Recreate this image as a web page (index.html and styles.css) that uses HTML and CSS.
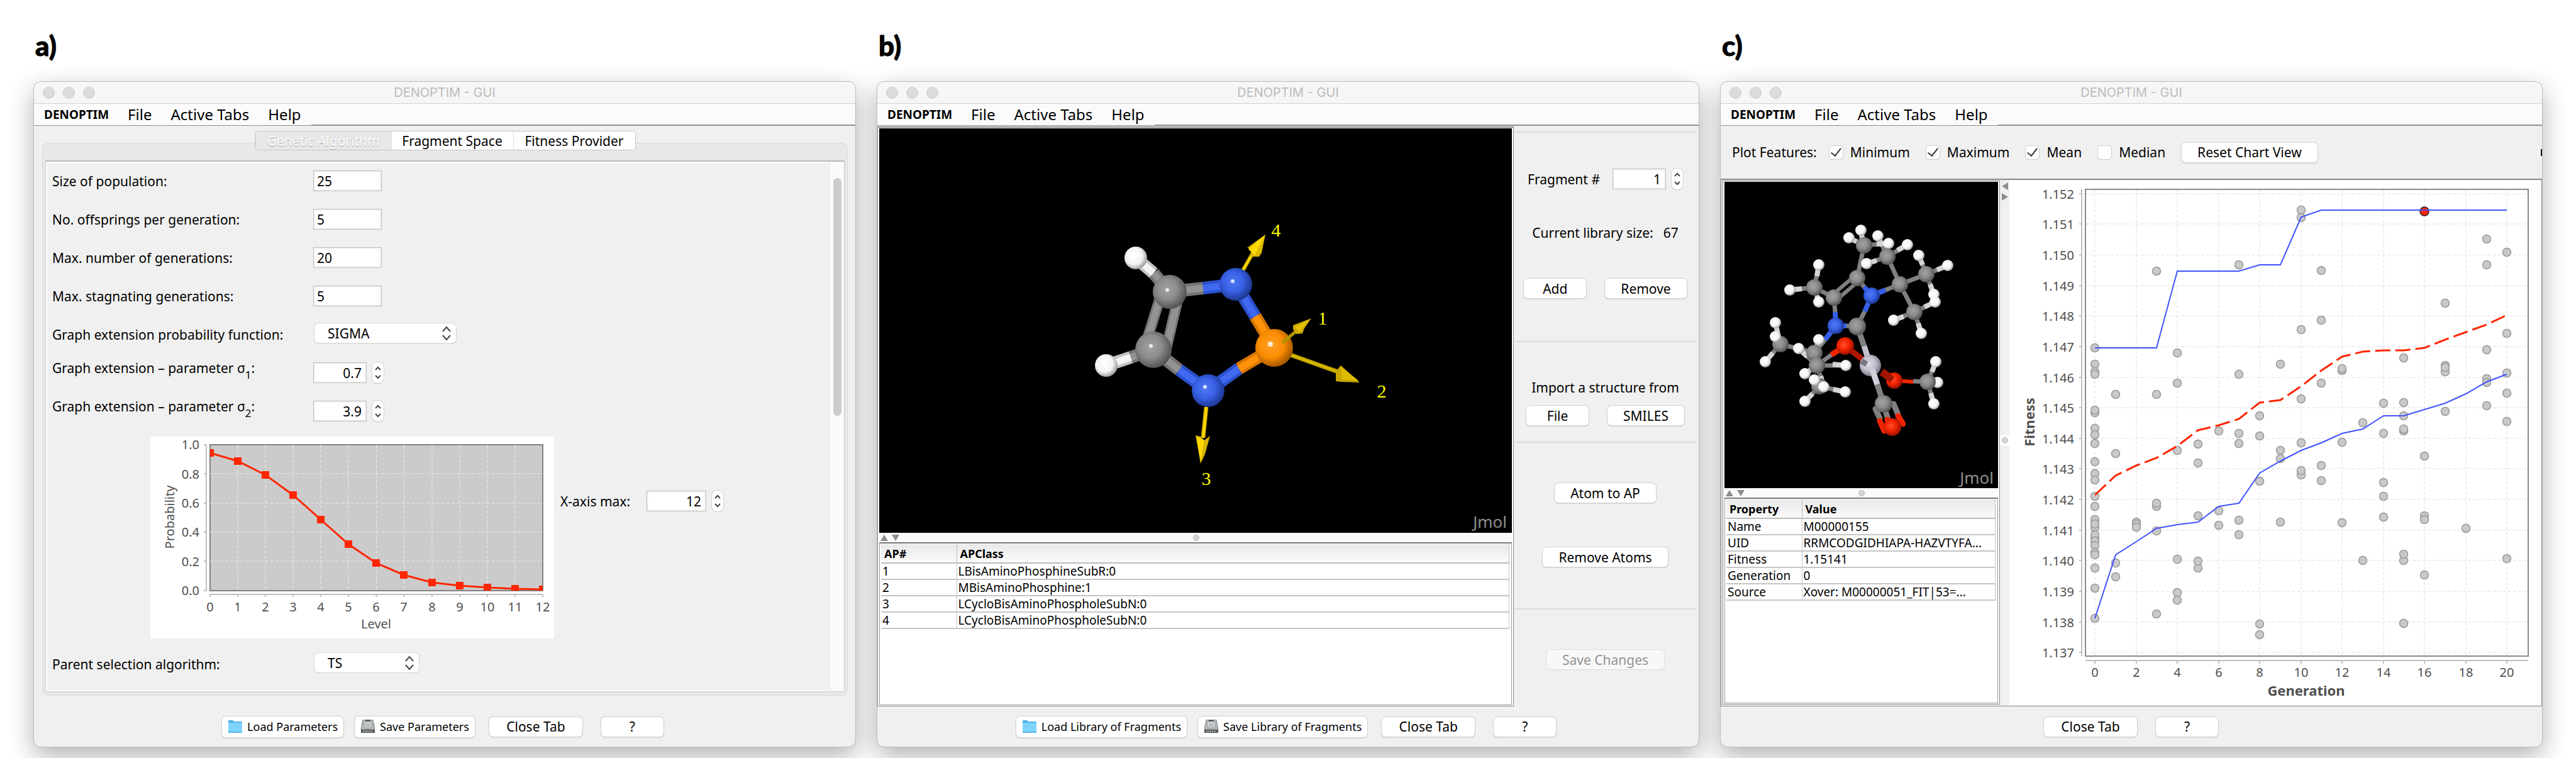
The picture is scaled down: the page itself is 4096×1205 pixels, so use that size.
FILE: index.html
```html
<!DOCTYPE html>
<html lang="en">
<head>
<meta charset="utf-8">
<title>DENOPTIM - GUI</title>
<link rel="stylesheet" href="styles.css">
</head>
<body>
<main class="figure">

<section class="panel">
  <h2 class="panel-label">a)</h2>
  <div class="window">
    <header class="titlebar"><span class="lights"><i></i><i></i><i></i></span><span class="title">DENOPTIM - GUI</span></header>
    <nav class="menubar"><span class="menus"><a class="brand" href="#">DENOPTIM</a><a href="#">File</a><a href="#">Active Tabs</a><a href="#">Help</a></span></nav>
    <div class="content tabbed">
      <div class="tabs">
        <button class="tab active">Genetic Algorithm</button>
        <button class="tab">Fragment Space</button>
        <button class="tab">Fitness Provider</button>
      </div>
      <div class="tab-pane">
        <div class="scroll-pane">
          <form class="form">
            <div class="row"><label for="pop">Size of population:</label><input class="field" id="pop" type="text" value="25"></div>
            <div class="row"><label for="off">No. offsprings per generation:</label><input class="field" id="off" type="text" value="5"></div>
            <div class="row"><label for="gen">Max. number of generations:</label><input class="field" id="gen" type="text" value="20"></div>
            <div class="row"><label for="stag">Max. stagnating generations:</label><input class="field" id="stag" type="text" value="5"></div>
            <div class="row"><label for="fun">Graph extension probability function:</label>
              <span class="select wide"><select id="fun"><option>SIGMA</option></select><svg class="updown" viewBox="0 0 16 26"><path d="M2 10l6-7 6 7M2 16l6 7 6-7"/></svg></span></div>
            <div class="row"><label class="with-sub" for="s1">Graph extension – parameter σ<sub>1</sub>:</label>
              <span class="spinner"><input class="field num" id="s1" type="text" value="0.7"><span class="stepper"><button type="button" aria-label="Increase"><svg viewBox="0 0 12 8"><path d="M2 6l4-4 4 4"/></svg></button><button type="button" aria-label="Decrease"><svg viewBox="0 0 12 8"><path d="M2 2l4 4 4-4"/></svg></button></span></span></div>
            <div class="row"><label class="with-sub" for="s2">Graph extension – parameter σ<sub>2</sub>:</label>
              <span class="spinner"><input class="field num" id="s2" type="text" value="3.9"><span class="stepper"><button type="button" aria-label="Increase"><svg viewBox="0 0 12 8"><path d="M2 6l4-4 4 4"/></svg></button><button type="button" aria-label="Decrease"><svg viewBox="0 0 12 8"><path d="M2 2l4 4 4-4"/></svg></button></span></span></div>
            <div class="chart-row">
              <svg class="sigma-chart" viewBox="0 0 642 321">
                <defs><clipPath id="plotA"><rect x="95" y="13" width="529" height="232"/></clipPath>
                <marker id="sq" markerUnits="userSpaceOnUse" markerWidth="12" markerHeight="12" refX="6" refY="6"><rect width="12" height="12" fill="#ff2600"/></marker></defs>
                <rect width="642" height="321" fill="#fff"/>
                <rect x="95" y="13" width="529" height="232" fill="#cbcbcb" stroke="#808080" stroke-width="2"/>
                <path class="grid-a" d="M139 13v232M183 13v232M227 13v232M271 13v232M315 13v232M359.500 13v232M403.500 13v232M448 13v232M492 13v232M536 13v232M580 13v232M95 59h529M95 106h529M95 152h529M95 198h529"/>
                <path class="axis" d="M89 13v232M95 251h529M85 13h4M85 59h4M85 106h4M85 152h4M85 198h4M85 245h4M95 251v4M139 251v4M183 251v4M227 251v4M271 251v4M315 251v4M359.500 251v4M403.500 251v4M448 251v4M492 251v4M536 251v4M580 251v4M624 251v4"/>
                <g clip-path="url(#plotA)"><polyline fill="none" stroke="#ff2600" stroke-width="3" marker-start="url(#sq)" marker-mid="url(#sq)" marker-end="url(#sq)" points="95,26 139,39 183,61 227,93 271,132 315,171 359,201 403,220 448,232 492,237 536,240 580,242 624,243"/></g>
                <g class="tick end"><text x="78" y="20">1.0</text><text x="78" y="67">0.8</text><text x="78" y="113">0.6</text><text x="78" y="159">0.4</text><text x="78" y="206">0.2</text><text x="78" y="252">0.0</text></g>
                <g class="tick mid"><text x="95" y="278">0</text><text x="139" y="278">1</text><text x="183" y="278">2</text><text x="227" y="278">3</text><text x="271" y="278">4</text><text x="315" y="278">5</text><text x="359" y="278">6</text><text x="403" y="278">7</text><text x="448" y="278">8</text><text x="492" y="278">9</text><text x="536" y="278">10</text><text x="580" y="278">11</text><text x="624" y="278">12</text>
                <text x="359" y="305">Level</text><text transform="translate(38 128) rotate(-90)">Probability</text></g>
              </svg>
              <div class="xmax"><label for="xm">X-axis max:</label>
              <span class="spinner"><input class="field num big" id="xm" type="text" value="12"><span class="stepper"><button type="button" aria-label="Increase"><svg viewBox="0 0 12 8"><path d="M2 6l4-4 4 4"/></svg></button><button type="button" aria-label="Decrease"><svg viewBox="0 0 12 8"><path d="M2 2l4 4 4-4"/></svg></button></span></span></div>
            </div>
            <div class="row"><label for="psa">Parent selection algorithm:</label>
              <span class="select narrow"><select id="psa"><option>TS</option></select><svg class="updown" viewBox="0 0 16 26"><path d="M2 10l6-7 6 7M2 16l6 7 6-7"/></svg></span></div>
          </form>
          <div class="scrollbar"><div class="thumb"></div></div>
        </div>
      </div>
    </div>
    <footer class="actions">
      <button class="btn icon-btn"><svg class="ico" viewBox="0 0 24 22"><path d="M1 2q0-1 1-1h6l2 2h12q1 0 1 1v4H1z" fill="#4fb4e6"/><rect x="1" y="5" width="22" height="16" rx="1" fill="#7fd3fb"/><path d="M1 20h22" stroke="#5bb8e8" stroke-width="2"/></svg>Load Parameters</button>
      <button class="btn icon-btn"><svg class="ico" viewBox="0 0 24 22"><path d="M4 0h16l3 16H1z" fill="#b4b9bb" stroke="#7e8385"/><ellipse cx="12" cy="8" rx="7" ry="6" fill="#c9cdce" stroke="#93989a"/><circle cx="12" cy="9" r="2" fill="#dfe2e3" stroke="#8a8f91"/><path d="M1 16h22v5H1z" fill="#4e5152"/><path d="M4 18.500h16" stroke="#c0c4c5" stroke-width="2" stroke-dasharray="2 1"/><path d="M8 1.500h8" stroke="#444" stroke-width="2"/></svg>Save Parameters</button>
      <button class="btn close">Close Tab</button>
      <button class="btn help">?</button>
    </footer>
  </div>
</section>

<section class="panel">
  <h2 class="panel-label">b)</h2>
  <div class="window">
    <header class="titlebar"><span class="lights"><i></i><i></i><i></i></span><span class="title">DENOPTIM - GUI</span></header>
    <nav class="menubar"><span class="menus"><a class="brand" href="#">DENOPTIM</a><a href="#">File</a><a href="#">Active Tabs</a><a href="#">Help</a></span></nav>
    <div class="content split">
      <div class="viewer">
        <svg class="canvas" viewBox="0 0 1006 643">
          <defs>
            <radialGradient id="gC" cx=".42" cy=".42" r=".62"><stop offset="0" stop-color="#a2a2a2"/><stop offset=".5" stop-color="#8b8b8b"/><stop offset="1" stop-color="#4c4c4c"/></radialGradient>
            <radialGradient id="gN" cx=".42" cy=".42" r=".62"><stop offset="0" stop-color="#5078f4"/><stop offset=".5" stop-color="#3860e6"/><stop offset="1" stop-color="#1a3286"/></radialGradient>
            <radialGradient id="gP" cx=".42" cy=".42" r=".62"><stop offset="0" stop-color="#ffa028"/><stop offset=".55" stop-color="#fb8c00"/><stop offset="1" stop-color="#985200"/></radialGradient>
            <radialGradient id="gH" cx=".42" cy=".42" r=".62"><stop offset="0" stop-color="#fff"/><stop offset=".6" stop-color="#f4f4f4"/><stop offset="1" stop-color="#929292"/></radialGradient>
            <radialGradient id="gO" cx=".42" cy=".42" r=".62"><stop offset="0" stop-color="#ff5030"/><stop offset=".5" stop-color="#f42200"/><stop offset="1" stop-color="#8c1000"/></radialGradient>
            <radialGradient id="gM" cx=".42" cy=".42" r=".62"><stop offset="0" stop-color="#dedde8"/><stop offset=".5" stop-color="#c2c1cd"/><stop offset="1" stop-color="#737280"/></radialGradient>
          </defs>
          <rect width="1006" height="643"/>
          <g fill="none" stroke-width="20">
            <path stroke="#747474" d="M462 260L515 254M436 352L477 384M462 260L436 230M436 352L400 364"/>
            <path stroke="#2b50cc" d="M515 254L567 248M477 384L523 417L572 382M567 248L598 299"/>
            <path stroke="#d87600" d="M598 299L628 349L572 382"/>
            <path stroke="#c4c4c4" d="M436 230L408 206M400 364L361 377"/>
            <path stroke="#747474" stroke-width="17" d="M447 268L423 345M474 275L456 352"/>
          </g>
          <g fill="none" stroke-width="11">
            <path stroke="#939393" d="M462 260L515 254M436 352L477 384M462 260L436 230M436 352L400 364M447 268L423 345M474 275L456 352"/>
            <path stroke="#4068f0" d="M515 254L567 248M477 384L523 417L572 382M567 248L598 299"/>
            <path stroke="#ff9208" d="M598 299L628 349L572 382"/>
            <path stroke="#f4f4f4" d="M436 230L408 206M400 364L361 377"/>
          </g>
          <path stroke="#c8a800" stroke-width="6" d="M577 228L597 193"/><path stroke="#ffd800" stroke-width="3" d="M577 228L597 193"/>
          <path fill="#dcb800" d="M614 169L585 190l7 2-2 12 14 0 4-6z"/><path fill="#ffd800" d="M614 169L587 192l10 10z"/>
          <circle cx="408" cy="206" r="18" fill="url(#gH)"/><circle cx="361" cy="377" r="18" fill="url(#gH)"/>
          <circle cx="462" cy="260" r="27" fill="url(#gC)"/><circle cx="436" cy="352" r="29" fill="url(#gC)"/>
          <circle cx="567" cy="248" r="26" fill="url(#gN)"/><circle cx="523" cy="417" r="26" fill="url(#gN)"/>
          <path stroke="#b89a00" stroke-width="7" d="M648 358L732 388"/><path stroke="#dcb800" stroke-width="3" d="M648 358L732 388"/>
          <path fill="#c8a600" d="M764 404L734 377l-8 9 0 16 8 1z"/><path fill="#e0bc00" d="M762 401L734 379l2 20z"/>
          <circle cx="628" cy="349" r="30" fill="url(#gP)"/>
          <path stroke="#b09200" stroke-width="5" d="M641 341L668 318"/><path fill="#ccaa00" d="M687 302L658 313l0 6 5 8 10-1 3-8z"/><path fill="#e4c000" d="M684 304L661 316l7 8z"/>
          <path stroke="#b89a00" stroke-width="7" d="M520 443L515 492"/><path stroke="#ffd800" stroke-width="4" d="M520 443L515 492"/>
          <path fill="#d8b400" d="M511 533L503 488l8 2 6 6 9-7-8 29z"/><path fill="#ffd800" d="M511 530L505 490l12 6z"/>
          <g fill="#fff" opacity=".8"><circle cx="458" cy="257" r="3"/><circle cx="432" cy="346" r="3"/><circle cx="562" cy="243" r="3"/><circle cx="518" cy="411" r="3"/><circle cx="622" cy="343" r="4"/></g>
          <g class="ap-label"><text x="631" y="172">4</text><text x="705" y="312">1</text><text x="799" y="428">2</text><text x="520" y="567">3</text></g>
          <text class="jmol" x="998" y="635">Jmol</text>
        </svg>
        <div class="divider"><svg class="arrows" viewBox="0 0 34 12"><path d="M1 11l6-10 6 10zM19 1h12l-6 10z"/></svg><i class="knob"></i></div>
        <div class="table-box">
          <table class="ap-table">
            <thead><tr><th>AP#</th><th>APClass</th></tr></thead>
            <tbody>
              <tr><td>1</td><td>LBisAminoPhosphineSubR:0</td></tr>
              <tr><td>2</td><td>MBisAminoPhosphine:1</td></tr>
              <tr><td>3</td><td>LCycloBisAminoPhospholeSubN:0</td></tr>
              <tr><td>4</td><td>LCycloBisAminoPhospholeSubN:0</td></tr>
            </tbody>
          </table>
        </div>
      </div>
      <aside class="side">
        <div class="group navigate">
          <div class="frag"><label for="frag">Fragment #</label>
          <span class="spinner"><input class="field num" id="frag" type="text" value="1"><span class="stepper"><button type="button" aria-label="Increase"><svg viewBox="0 0 12 8"><path d="M2 6l4-4 4 4"/></svg></button><button type="button" aria-label="Decrease"><svg viewBox="0 0 12 8"><path d="M2 2l4 4 4-4"/></svg></button></span></span></div>
          <div class="size"><span>Current library size:</span><span>67</span></div>
          <div class="pair"><button class="btn">Add</button><button class="btn">Remove</button></div>
        </div>
        <div class="group import">
          <div>Import a structure from</div>
          <div class="pair"><button class="btn">File</button><button class="btn">SMILES</button></div>
        </div>
        <div class="group edit">
          <button class="btn">Atom to AP</button>
          <button class="btn">Remove Atoms</button>
        </div>
        <div class="group save"><button class="btn" disabled>Save Changes</button></div>
      </aside>
    </div>
    <footer class="actions">
      <button class="btn icon-btn"><svg class="ico" viewBox="0 0 24 22"><path d="M1 2q0-1 1-1h6l2 2h12q1 0 1 1v4H1z" fill="#4fb4e6"/><rect x="1" y="5" width="22" height="16" rx="1" fill="#7fd3fb"/><path d="M1 20h22" stroke="#5bb8e8" stroke-width="2"/></svg>Load Library of Fragments</button>
      <button class="btn icon-btn"><svg class="ico" viewBox="0 0 24 22"><path d="M4 0h16l3 16H1z" fill="#b4b9bb" stroke="#7e8385"/><ellipse cx="12" cy="8" rx="7" ry="6" fill="#c9cdce" stroke="#93989a"/><circle cx="12" cy="9" r="2" fill="#dfe2e3" stroke="#8a8f91"/><path d="M1 16h22v5H1z" fill="#4e5152"/><path d="M4 18.500h16" stroke="#c0c4c5" stroke-width="2" stroke-dasharray="2 1"/><path d="M8 1.500h8" stroke="#444" stroke-width="2"/></svg>Save Library of Fragments</button>
      <button class="btn close">Close Tab</button>
      <button class="btn help">?</button>
    </footer>
  </div>
</section>

<section class="panel">
  <h2 class="panel-label">c)</h2>
  <div class="window">
    <header class="titlebar"><span class="lights"><i></i><i></i><i></i></span><span class="title">DENOPTIM - GUI</span></header>
    <nav class="menubar"><span class="menus"><a class="brand" href="#">DENOPTIM</a><a href="#">File</a><a href="#">Active Tabs</a><a href="#">Help</a></span></nav>
    <div class="toolbar">
      <span class="tool-title">Plot Features:</span>
      <label class="check"><input type="checkbox" checked>Minimum</label>
      <label class="check"><input type="checkbox" checked>Maximum</label>
      <label class="check"><input type="checkbox" checked>Mean</label>
      <label class="check"><input type="checkbox">Median</label>
      <button class="btn">Reset Chart View</button>
      <i class="clipped"></i>
    </div>
    <div class="content evolution">
      <div class="viewer">
        <svg class="canvas" viewBox="0 0 435 487">
          <defs>
            <marker id="mH" markerUnits="userSpaceOnUse" markerWidth="18" markerHeight="18" refX="9" refY="9"><circle cx="9" cy="9" r="9" fill="url(#gH)"/></marker>
            <marker id="mC" markerUnits="userSpaceOnUse" markerWidth="28" markerHeight="28" refX="14" refY="14"><circle cx="14" cy="14" r="13" fill="url(#gC)"/></marker>
          </defs>
          <rect width="435" height="487"/>
          <g fill="none" stroke="#808080" stroke-width="7">
            <path d="M222 101L217 77M222 101L198 89M222 101L261 98M222 101L211 153M259 119L244 86M259 119L291 100M259 119L226 130M259 119L279 163L321 147L309 117M321 147L355 133M321 147L333 179M279 163L302 207L335 191M302 207L269 220M302 207L313 241M143 168L150 132M143 168L104 172M143 168L150 191M143 168L174 184M89 258L81 224M89 258L65 286M89 258L143 272L150 251M147 292L118 265M147 292L193 292M147 292L128 305M147 292L158 326M151 325L128 349M151 325L192 334M323 318L336 286M323 318L333 353M323 318L339 319M279 163L256 172M211 153L222 167M174 184L176 207M211 230L194 229M211 230L223 206M211 230L222 261M143 272L160 251M147 292L170 275M323 318L300 317"/>
            <path stroke-width="6" d="M171 180L207 150M177 189L213 158"/>
            <path stroke="#3560e8" stroke-width="8" d="M234 181L256 172M234 181L222 167M234 181L223 206M177 229L176 207M177 229L194 229M177 229L160 251"/>
            <path stroke="#d4d4d4" stroke-width="8" d="M217 77L219 90M198 89L210 95M261 98L242 99M244 86L251 102M291 100L275 109M226 130L242 125M309 117L315 132M355 133L338 140M333 179L327 163M335 191L318 199M269 220L285 214M313 241L308 225M150 132L147 150M104 172L123 170M150 191L147 181M81 224L85 242M65 286L77 272M150 251L147 262M118 265L132 278M193 292L172 290M128 305L138 298M158 326L153 309M128 349L140 337M192 334L173 330M336 286L330 302M333 353L328 336"/>
          </g>
          <polyline fill="none" marker-start="url(#mC)" marker-mid="url(#mC)" marker-end="url(#mC)" points="222,101 211,153 174,184 143,168 89,258 151,325 143,272 147,292 279,163"/>
          <g fill="none" stroke-width="9"><path stroke="#b01800" d="M232 292L192 261"/><path stroke="#f02400" d="M192 261L170 275"/><path stroke="#c2c1cd" d="M232 292L222 261M232 292L243 322"/><path stroke="#808080" d="M243 322L253 353M222 261L211 230"/><path stroke="#a01600" stroke-width="12" d="M250 302L270 316"/><path stroke="#f02400" stroke-width="6" d="M270 316L300 318"/></g>
          <circle cx="211" cy="230" r="14" fill="url(#gC)"/>
          <circle cx="234" cy="181" r="13" fill="url(#gN)"/><circle cx="177" cy="229" r="13" fill="url(#gN)"/>
          <circle cx="192" cy="261" r="14" fill="url(#gO)"/>
          <circle cx="232" cy="292" r="17" fill="url(#gM)"/><path stroke="#777681" stroke-width="9" d="M218 285l8 5"/><path stroke="#d0cfda" stroke-width="9" d="M235 298l8 24"/>
          <circle cx="270" cy="316" r="13" fill="url(#gO)"/><path stroke="#a01600" stroke-width="11" d="M253 304l14 11"/>
          <g fill="none" stroke-width="9" stroke-linecap="round"><path stroke="#808080" d="M240 361L247 376M254 358L260 377M269 353L276 370"/><path stroke="#f02400" d="M247 380L254 396M259 378L263 390M276 372L284 385"/></g>
          <circle cx="253" cy="353" r="14" fill="url(#gC)"/><circle cx="267" cy="390" r="14" fill="url(#gO)"/>
          <polyline fill="none" marker-start="url(#mH)" marker-mid="url(#mH)" marker-end="url(#mH)" points="217,77 198,89 261,98 333,179 339,319"/>
          <polyline fill="none" marker-start="url(#mC)" marker-mid="url(#mC)" marker-end="url(#mC)" points="259,119 321,147 302,207 323,318"/>
          <polyline fill="none" marker-start="url(#mH)" marker-mid="url(#mH)" marker-end="url(#mH)" points="244,86 291,100 226,130 309,117 355,133 335,191 269,220 313,241 150,132 104,172 150,191 81,224 81,246 65,286 118,265 150,251 193,292 128,305 143,315 158,326 192,334 128,349 336,286 333,353"/>
          <text class="jmol" x="428" y="480">Jmol</text>
        </svg>
        <div class="divider"><svg class="arrows" viewBox="0 0 34 12"><path d="M1 11l6-10 6 10zM19 1h12l-6 10z"/></svg><i class="knob"></i></div>
        <div class="table-box">
          <table class="prop-table">
            <thead><tr><th>Property</th><th>Value</th></tr></thead>
            <tbody>
              <tr><td>Name</td><td>M00000155</td></tr>
              <tr><td>UID</td><td>RRMCODGIDHIAPA-HAZVTYFA...</td></tr>
              <tr><td>Fitness</td><td>1.15141</td></tr>
              <tr><td>Generation</td><td>0</td></tr>
              <tr><td>Source</td><td>Xover: M00000051_FIT|53=...</td></tr>
            </tbody>
          </table>
        </div>
      </div>
      <div class="vdivider"><svg viewBox="0 0 12 30"><path d="M11 1v12l-10-6zM1 18v12l10-6z"/></svg><span class="grip"><i class="knob"></i></span></div>
      <svg class="fitness-chart" viewBox="0 0 846 832" preserveAspectRatio="xMinYMin meet">
        <defs><marker id="dot" markerUnits="userSpaceOnUse" markerWidth="16" markerHeight="16" refX="8" refY="8"><circle cx="8" cy="8" r="6.500" fill="#c9c9c9" stroke="#9a9a9a" stroke-width="1.500"/></marker></defs>
        <path class="grid-c" d="M136 14v742M202 14v742M267 14v742M333 14v742M398 14v742M464 14v742M529 14v742M595 14v742M660 14v742M726 14v742M791 14v742M121 21h704M121 69h704M121 118h704M121 167h704M121 215h704M121 264h704M121 313h704M121 361h704M121 410h704M121 458h704M121 507h704M121 556h704M121 604h704M121 653h704M121 702h704M121 750h704"/>
        <rect x="121" y="14" width="704" height="742" fill="none" stroke="#8a8a8a" stroke-width="2"/>
        <path class="axis" d="M115 14v742M121 763h704M111 21h4M111 69h4M111 118h4M111 167h4M111 215h4M111 264h4M111 313h4M111 361h4M111 410h4M111 458h4M111 507h4M111 556h4M111 604h4M111 653h4M111 702h4M111 750h4M136 763v5M202 763v5M267 763v5M333 763v5M398 763v5M464 763v5M529 763v5M595 763v5M660 763v5M726 763v5M791 763v5"/>
        <polyline fill="none" marker-start="url(#dot)" marker-mid="url(#dot)" marker-end="url(#dot)" points="136,266 136,292 136,304 136,308 136,369 136,365 136,394 136,404 136,418 136,447 136,466 136,476 136,502 136,518 136,539 136,552 136,546 136,568 136,563 136,573 136,580 136,591 136,595 136,616 136,648 136,696 169,340 169,434 169,608 169,630 202,543 202,546 202,551 234,144 234,340 234,518 234,513 234,557 234,689 267,274 267,322 267,429 267,602 267,655 267,667 300,419 300,449 300,533 300,616 300,605 333,398 333,525 333,548 365,134 365,308 365,402 365,418 365,540 365,563 398,374 398,406 398,478 398,705 398,722 431,292 431,429 431,442 431,543 464,47 464,59 464,237 464,347 464,417 464,468 464,461 496,143 496,222 496,322 496,453 496,477 529,302 529,299 529,416 529,544 562,385 562,604 595,354 595,402 595,480 595,502 595,535 627,282 627,353 627,374 627,398 627,395 627,604 627,594 627,704 660,438 660,533 660,539 660,627 693,195 693,304 693,294 693,297 693,367 726,553 759,93 759,134 759,269 759,315 759,321 759,358 791,114 791,243 791,306 791,338 791,383 791,601"/>
        <circle cx="660" cy="49" r="7" fill="#ff2600" stroke="#222" stroke-width="1.500"/>
        <polyline class="bound" points="136,266 234,266 267,144 365,144 398,134 431,134 464,58 496,47 791,47"/>
        <polyline class="bound" points="136,696 169,595 202,574 234,553 267,547 300,543 333,518 365,513 398,465 431,446 464,429 496,417 529,402 562,395 595,374 627,374 660,364 693,354 726,339 759,320 791,308"/>
        <polyline fill="none" stroke="#ff2600" stroke-width="3" stroke-dasharray="24 8" points="136,500 169,469 202,453 234,441 267,422 300,397 333,389 365,379 398,353 431,349 464,327 496,302 529,280 562,272 595,270 627,270 660,266 693,253 726,241 759,229 791,214"/>
        <g class="tick end"><text x="103" y="29">1.152</text><text x="103" y="77">1.151</text><text x="103" y="126">1.150</text><text x="103" y="175">1.149</text><text x="103" y="223">1.148</text><text x="103" y="272">1.147</text><text x="103" y="321">1.146</text><text x="103" y="369">1.145</text><text x="103" y="418">1.144</text><text x="103" y="466">1.143</text><text x="103" y="515">1.142</text><text x="103" y="564">1.141</text><text x="103" y="612">1.140</text><text x="103" y="661">1.139</text><text x="103" y="710">1.138</text><text x="103" y="758">1.137</text></g>
        <g class="tick mid"><text x="136" y="789">0</text><text x="202" y="789">2</text><text x="267" y="789">4</text><text x="333" y="789">6</text><text x="398" y="789">8</text><text x="464" y="789">10</text><text x="529" y="789">12</text><text x="595" y="789">14</text><text x="660" y="789">16</text><text x="726" y="789">18</text><text x="791" y="789">20</text></g>
        <g class="axis-title"><text x="472" y="819">Generation</text><text transform="translate(40 384) rotate(-90)">Fitness</text></g>
      </svg>
    </div>
    <footer class="actions">
      <button class="btn close">Close Tab</button>
      <button class="btn help">?</button>
    </footer>
  </div>
</section>

</main>
</body>
</html>
```
FILE: styles.css
```css
* { box-sizing: border-box; }

body {
  margin: 0;
  overflow: hidden;
  background: #fff;
  color: #000;
  font: 21px/30px "Noto Sans", "Open Sans", sans-serif;
}

button, input, select { font: inherit; color: inherit; margin: 0; }

/* three windows side by side */
.figure {
  display: grid;
  grid-template-columns: repeat(3, 1fr);
  gap: 35px;
  min-height: 100vh;
  padding: 0 54px 18px;
}
.panel { display: flex; flex-direction: column; min-width: 0; }
.panel-label {
  margin: 0;
  padding: 48px 0 34px 2px;
  font: 900 44px/48px Lato, sans-serif;
  -webkit-text-stroke: 1px #000;
}
.window {
  flex: 1;
  display: flex;
  flex-direction: column;
  overflow: hidden;
  border-radius: 11px;
  background: #f0f0f0;
  box-shadow: 0 0 0 1px #bdbdbd, 0 14px 40px rgba(0, 0, 0, .32);
}

.titlebar {
  display: grid;
  grid-template-columns: 1fr auto 1fr;
  align-items: center;
  height: 35px;
  padding: 0 14px;
  background: #f6f6f6;
  border-bottom: 1px solid #d0d0d0;
}
.lights { display: flex; gap: 13px; }
.lights i { width: 19px; height: 19px; border-radius: 50%; background: #dcdcdc; border: 1px solid #cbcbcb; }
.title { font: 20px/24px Inter, sans-serif; color: #bcbcbc; }

.menubar {
  display: flex;
  height: 35px;
  background: #fbfbfb;
}
.menubar::after { content: ""; flex: 1; border-bottom: 2px solid #8f8f8f; }
.menus {
  display: flex;
  align-items: center;
  gap: 30px;
  padding: 0 16px;
  border-bottom: 1px solid #8f8f8f;
  font-size: 24px;
}
.menus a { color: #000; text-decoration: none; }
.menus .brand { font-size: 19px; font-weight: 700; }

.content { flex: 1; min-height: 0; }

/* form controls */
.field {
  width: 109px;
  height: 33px;
  padding: 0 5px;
  border: 1px solid #bdbdbd;
  border-radius: 0;
  background: #fff;
  box-shadow: inset 0 0 0 2px #f3f3f3;
}
.field.num { width: 85px; padding-right: 7px; text-align: right; }
.field.big { width: 95px; }
.spinner { display: inline-flex; gap: 9px; align-items: center; }
.stepper {
  display: flex;
  flex-direction: column;
  justify-content: center;
  gap: 5px;
  width: 18px;
  height: 33px;
  border-radius: 8px;
  background: #fff;
  box-shadow: 0 0 0 1px #d2d2d2, 0 1px 1px #aaa;
}
.stepper button { display: flex; justify-content: center; padding: 0; border: 0; background: none; }
.stepper svg { width: 12px; height: 8px; }
.stepper path, .updown path { fill: none; stroke: #444; stroke-width: 2; }
.select {
  display: inline-grid;
  align-items: center;
  height: 31px;
  margin: 0 0 4px 2px;
  border-radius: 6px;
  background: #fff;
  box-shadow: 0 0 0 1px #d6d6d6, 0 1px 1px #a8a8a8;
}
.select select {
  grid-area: 1 / 1;
  appearance: none;
  width: 100%;
  height: 31px;
  padding: 0 22px 0 21px;
  border: 0;
  background: none;
}
.updown { grid-area: 1 / 1; justify-self: end; width: 16px; height: 26px; margin-right: 7px; pointer-events: none; }
.wide { width: 225px; }
.narrow { width: 166px; }
.btn {
  height: 31px;
  min-width: 99px;
  padding: 0 25px;
  border: 0;
  border-radius: 6px;
  background: #fff;
  box-shadow: 0 0 0 1px #d2d2d2, 0 1px 2px #999;
  white-space: nowrap;
  line-height: 28px;
}
.btn:disabled { background: #f8f8f8; color: #939393; box-shadow: 0 0 0 1px #dedede, 0 1px 1px #ccc; }
.icon-btn { display: inline-flex; align-items: center; gap: 7px; height: 33px; padding: 0 9px; font-size: 18px; line-height: 33px; }
.ico { width: 24px; height: 22px; }

.actions {
  display: flex;
  justify-content: center;
  align-items: center;
  gap: 18px;
  height: 64px;
  padding-right: 6px;
}
.actions .close { width: 148px; margin-left: 5px; }
.actions .help { margin-left: 12px; }

/* genetic algorithm settings */
.tabbed { display: flex; flex-direction: column; padding: 8px 12px 17px 13px; }
.tabs {
  position: relative;
  z-index: 1;
  align-self: center;
  display: flex;
  height: 31px;
  margin-bottom: -12px;
  overflow: hidden;
  border-radius: 6px;
  border: 1px solid #c6c6c6;
}
.tab { width: 194px; padding: 0; border: 0; border-left: 1px solid #ddd; background: #fff; line-height: 28px; }
.tab.active { width: 216px; background: #e8e8e8; color: #fff; text-shadow: 0 1px 1px #999; }
.tab-pane {
  flex: 1;
  display: flex;
  padding: 27px 4px 5px;
  border: 1px solid #dadada;
  border-radius: 9px;
  background: #e8e8e8;
}
.scroll-pane {
  flex: 1;
  display: flex;
  border: 1px solid #c8c8c8;
  border-top: 2px solid #b8b8b8;
  background: #f0f0f0;
  box-shadow: inset 0 0 0 2px #fff;
}
.form { flex: 1; padding: 0 0 0 10px; }
.row { display: grid; grid-template-columns: 415px auto; align-items: center; justify-content: start; height: 61px; }
.row sub { font-size: 17px; line-height: 20px; vertical-align: -9px; }
.with-sub { padding-bottom: 10px; }
.chart-row { display: flex; align-items: flex-start; gap: 10px; padding: 10px 0 10px 156px; }
.sigma-chart { width: 642px; height: 321px; }
.xmax { display: flex; align-items: center; gap: 14px; margin-top: 86px; }
.xmax label { min-width: 123px; }
.scrollbar { width: 23px; padding: 26px 5px; background: #fafafa; border-left: 1px solid #e8e8e8; }
.thumb { width: 13px; height: 378px; border-radius: 7px; background: #cbcbcb; }

/* charts */
.tick { font-size: 20px; fill: #4f4f4f; }
.end { text-anchor: end; }
.mid { text-anchor: middle; }
.axis-title { font-size: 22px; font-weight: 700; fill: #4f4f4f; text-anchor: middle; }
.axis { fill: none; stroke: #c0c0c0; stroke-width: 2; }
.grid-a { fill: none; stroke: #ececec; stroke-width: 1; stroke-dasharray: 5 3; }
.grid-c { fill: none; stroke: #dedede; stroke-width: 1; stroke-dasharray: 5 3; }
.bound { fill: none; stroke: #4152ff; stroke-width: 2; }

/* molecule viewer with a table below it */
.split { display: flex; }
.viewer {
  display: flex;
  flex-direction: column;
  min-width: 0;
  padding: 1px 2px;
  border: 1px solid #8c8c8c;
  background: #fff;
}
.split .viewer { flex: 1; margin: 1px 0 0; border-top-width: 2px; }
.canvas { display: block; width: 100%; height: auto; overflow: visible; }
.jmol { font-size: 26px; fill: #8f8f8f; text-anchor: end; }
.ap-label { font: 30px "Liberation Serif", serif; fill: #ff0; text-anchor: middle; }
.divider {
  display: grid;
  grid-template-columns: 1fr auto 1fr;
  align-items: center;
  height: 15px;
  padding-left: 1px;
  background: #fbfbfb;
}
.arrows { width: 34px; height: 12px; fill: #8d8d8d; }
.knob { width: 10px; height: 10px; border-radius: 50%; background: #d4d4d4; border: 1px solid #b4b4b4; }
.table-box { flex: 1; padding: 1px 3px 0 2px; border: 1px solid #999; border-top: 2px solid #777; }
table { width: 100%; table-layout: fixed; border-collapse: collapse; font-size: 19px; line-height: 24px; }
th {
  height: 30px;
  padding: 0 5px;
  text-align: left;
  font-size: 18px;
  background: linear-gradient(#e9e9e9, #fafafa);
  border: solid #bcbcbc;
  border-width: 0 1px 2px 0;
}
td {
  height: 26px;
  padding: 0 2px;
  overflow: hidden;
  white-space: nowrap;
  border: solid #c6c6c6;
  border-width: 0 1px 2px 0;
}
th:first-child { width: 120px; }

/* fragment editing controls */
.side { width: 294px; padding: 9px 4px 0 1px; }
.group { display: flex; flex-direction: column; align-items: center; border-top: 2px solid #dcdcdc; }
.pair { display: flex; gap: 30px; }
.frag { display: flex; align-items: center; gap: 20px; }
.size { display: flex; gap: 16px; }
.navigate { height: 333px; padding-top: 57px; }
.navigate .size { margin: 54px 0 58px; }
.import { height: 160px; padding-top: 57px; gap: 14px; }
.edit { height: 265px; padding-top: 64px; gap: 71px; }
.save { padding-top: 64px; }

/* evolution inspector */
.toolbar { display: flex; align-items: center; gap: 26px; height: 84px; padding-left: 18px; }
.tool-title { margin-right: -6px; }
.check { display: flex; align-items: center; gap: 12px; }
.check input {
  appearance: none;
  display: grid;
  place-items: center;
  width: 21px;
  height: 21px;
  border-radius: 5px;
  background: #fff;
  box-shadow: 0 0 0 1px #cfcfcf, 0 1px 1px #aaa;
}
.check input:checked::before {
  content: "";
  width: 7px;
  height: 14px;
  margin-bottom: 4px;
  border: solid #333;
  border-width: 0 2px 2px 0;
  transform: rotate(38deg);
}
.clipped { width: 2px; height: 11px; margin-left: auto; background: #111; }
.evolution { display: flex; padding: 1px 0 1px 2px; border: 1px solid #8a8a8a; border-top-width: 2px; }
.evolution .viewer { width: 441px; margin-bottom: 1px; }
.vdivider { display: grid; justify-items: center; grid-template-rows: 403px auto 1fr; width: 15px; padding-top: 2px; }
.vdivider svg { width: 12px; height: 30px; fill: #8d8d8d; }
.grip { display: grid; place-items: center; width: 15px; height: 16px; background: #fff; }
.fitness-chart { flex: 1; min-width: 0; height: auto; background: #fff; }
```
